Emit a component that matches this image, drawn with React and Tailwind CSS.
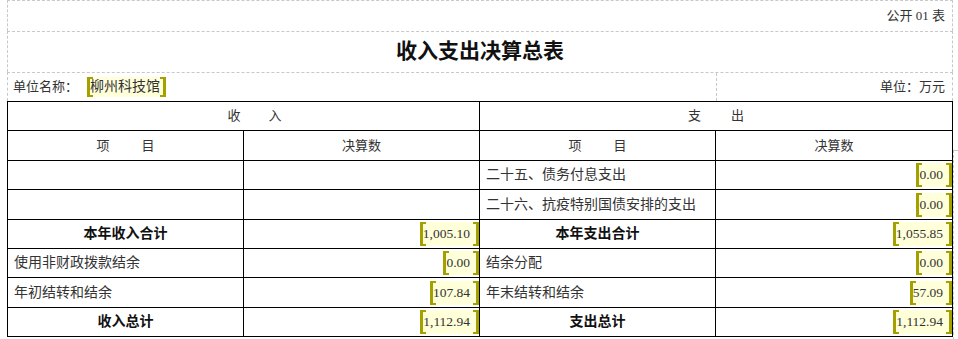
import React from "react";

const FONT = "font-['Liberation_Serif','Noto_Sans_CJK_SC',serif]";

function Val({ v, h = "h-[24px]", size = "text-[13.5px]", pr = "pr-[3px]" }) {
  return (
    <span className={`inline-flex ${h} items-stretch bg-[#ffffd9]`}>
      <span className="w-[6px] border-l-[3px] border-y-2 border-[#a3a000]" />
      <span className={`relative -ml-[3px] flex items-center ${pr} ${size} leading-none text-[#333]`}>{v}</span>
      <span className="w-[6px] border-r-[3px] border-y-2 border-[#a3a000]" />
    </span>
  );
}

function Cell({ children, kind = "left", h }) {
  const base = "flex items-center border-r border-b border-black text-[14px] leading-none";
  if (kind === "center")
    return <div className={`${base} ${h} justify-center text-[#333]`}>{children}</div>;
  if (kind === "bold")
    return <div className={`${base} ${h} justify-center font-bold text-[#111]`}>{children}</div>;
  if (kind === "num")
    return <div className={`${base} ${h} justify-end`}>{children}</div>;
  return <div className={`${base} ${h} pl-[6px] text-[#333]`}>{children}</div>;
}

export default function App() {
  const rows = [
    { h: "h-[29px]", c: [["", "left"], ["", "left"], ["二十五、债务付息支出", "left"], [<Val v="0.00" />, "num"]] },
    { h: "h-[30px]", c: [["", "left"], ["", "left"], ["二十六、抗疫特别国债安排的支出", "left"], [<Val v="0.00" />, "num"]] },
    { h: "h-[29px]", c: [["本年收入合计", "bold"], [<Val v="1,005.10" />, "num"], ["本年支出合计", "bold"], [<Val v="1,055.85" />, "num"]] },
    { h: "h-[29px]", c: [["使用非财政拨款结余", "left"], [<Val v="0.00" />, "num"], ["结余分配", "left"], [<Val v="0.00" />, "num"]] },
    { h: "h-[30px]", c: [["年初结转和结余", "left"], [<Val v="107.84" />, "num"], ["年末结转和结余", "left"], [<Val v="57.09" />, "num"]] },
    { h: "h-[29px]", c: [["收入总计", "bold"], [<Val v="1,112.94" />, "num"], ["支出总计", "bold"], [<Val v="1,112.94" />, "num"]] },
  ];

  return (
    <div className={`relative h-[339px] w-[958px] overflow-hidden bg-white ${FONT}`}>
      <div className="ml-[7px] w-[946px]">
        {/* header area */}
        <div className="flex h-[31px] items-center justify-end border-x border-t border-dashed border-[#c8c8c8] pr-[7px] text-[13px] text-[#333]">
          公开 01 表
        </div>
        <div className="flex h-[41px] items-center justify-center border-x border-t border-dashed border-[#c8c8c8] text-[21px] font-bold text-[#111]">
          收入支出决算总表
        </div>
        <div className="flex h-[29px] border-x border-t border-dashed border-[#c8c8c8]">
          <div className="flex w-[708px] items-center pl-[5px] text-[13px] text-[#333]">
            <span className="w-[74px]">单位名称：</span>
            <Val v="柳州科技馆" h="h-[20px]" size="text-[14px]" pr="pr-0" />
          </div>
          <div className="flex flex-1 items-center justify-end border-l border-dashed border-[#c8c8c8] pr-[7px] text-[13px] text-[#333]">
            单位：万元
          </div>
        </div>

        {/* table */}
        <div className="grid grid-cols-[236px_236px_236px_237px] border-l border-t border-black">
          <div className="col-span-2 flex h-[29px] items-center justify-center gap-[28px] border-r border-b border-black pl-[22px] text-[13px] text-[#333]">
            <span>收</span>
            <span>入</span>
          </div>
          <div className="col-span-2 flex h-[29px] items-center justify-center gap-[30px] border-r border-b border-black text-[13px] text-[#333]">
            <span>支</span>
            <span>出</span>
          </div>

          <div className="flex h-[30px] items-center justify-center gap-[32px] border-r border-b border-black text-[13px] text-[#333]">
            <span>项</span>
            <span>目</span>
          </div>
          <div className="flex h-[30px] items-center justify-center border-r border-b border-black text-[13px] text-[#333]">
            决算数
          </div>
          <div className="flex h-[30px] items-center justify-center gap-[32px] border-r border-b border-black text-[13px] text-[#333]">
            <span>项</span>
            <span>目</span>
          </div>
          <div className="flex h-[30px] items-center justify-center border-r border-b border-black text-[13px] text-[#333]">
            决算数
          </div>

          {rows.map((r, i) =>
            r.c.map(([content, kind], j) => (
              <Cell key={`${i}-${j}`} kind={kind} h={r.h}>
                {content}
              </Cell>
            ))
          )}
        </div>
      </div>
      <div className="pointer-events-none absolute left-[953px] top-[150px] h-[190px] w-[5px] border-l border-t border-dashed border-[#c8c8c8]" />
    </div>
  );
}
